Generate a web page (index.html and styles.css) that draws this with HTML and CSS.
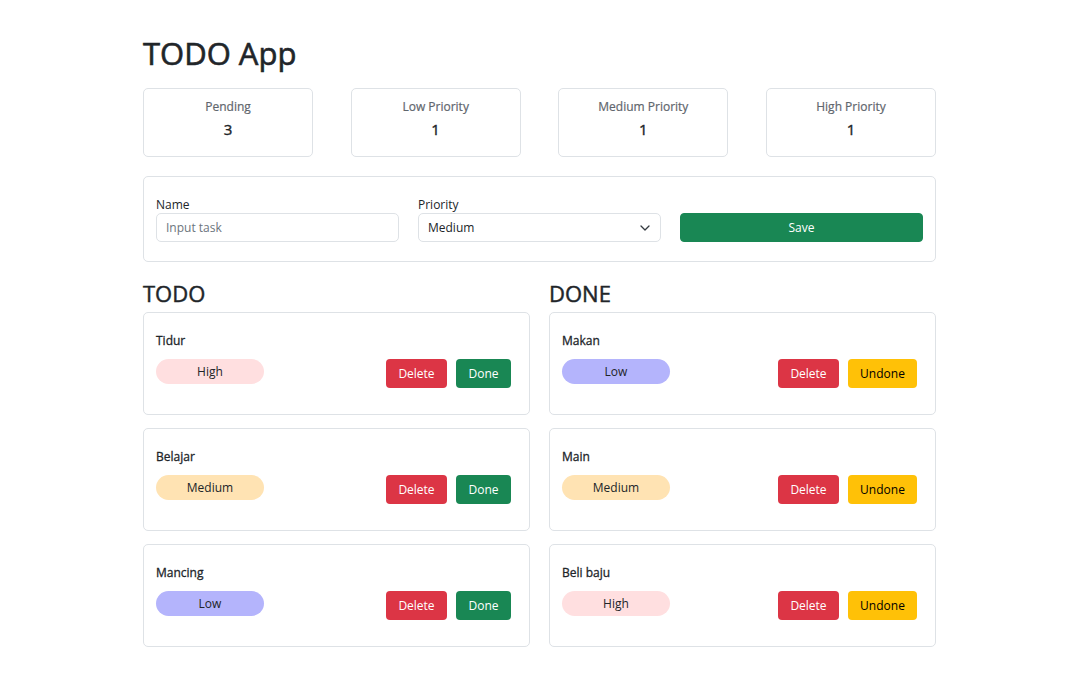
FILE: index.html
```html
<!DOCTYPE html>
<html>
<head>
<meta charset="utf-8">
<link rel="stylesheet" href="styles.css">
</head>
<body>
<div class="container">
  <h1 class="title">TODO App</h1>
  <div class="stats">
    <div class="stat"><div class="stat-label">Pending</div><div class="stat-value">3</div></div>
    <div class="stat"><div class="stat-label">Low Priority</div><div class="stat-value">1</div></div>
    <div class="stat"><div class="stat-label">Medium Priority</div><div class="stat-value">1</div></div>
    <div class="stat"><div class="stat-label">High Priority</div><div class="stat-value">1</div></div>
  </div>
  <div class="form-card">
    <div class="field">
      <label class="label">Name</label>
      <input class="input" type="text" placeholder="Input task">
    </div>
    <div class="field">
      <label class="label">Priority</label>
      <div class="select">
        <span>Medium</span>
        <svg width="10" height="6" viewBox="0 0 10 6"><path d="M1 1l4 4 4-4" fill="none" stroke="#343a40" stroke-width="1.3" stroke-linecap="round" stroke-linejoin="round"/></svg>
      </div>
    </div>
    <div class="field field-btn">
      <button class="btn btn-save">Save</button>
    </div>
  </div>
  <div class="lists">
    <div class="list">
      <h2 class="list-title">TODO</h2>
      <div class="task">
        <div class="task-name">Tidur</div>
        <div class="task-row">
          <span class="badge badge-high">High</span>
          <div class="actions"><button class="btn btn-delete">Delete</button><button class="btn btn-done">Done</button></div>
        </div>
      </div>
      <div class="task">
        <div class="task-name">Belajar</div>
        <div class="task-row">
          <span class="badge badge-medium">Medium</span>
          <div class="actions"><button class="btn btn-delete">Delete</button><button class="btn btn-done">Done</button></div>
        </div>
      </div>
      <div class="task">
        <div class="task-name">Mancing</div>
        <div class="task-row">
          <span class="badge badge-low">Low</span>
          <div class="actions"><button class="btn btn-delete">Delete</button><button class="btn btn-done">Done</button></div>
        </div>
      </div>
    </div>
    <div class="list">
      <h2 class="list-title">DONE</h2>
      <div class="task">
        <div class="task-name">Makan</div>
        <div class="task-row">
          <span class="badge badge-low">Low</span>
          <div class="actions"><button class="btn btn-delete">Delete</button><button class="btn btn-undone">Undone</button></div>
        </div>
      </div>
      <div class="task">
        <div class="task-name">Main</div>
        <div class="task-row">
          <span class="badge badge-medium">Medium</span>
          <div class="actions"><button class="btn btn-delete">Delete</button><button class="btn btn-undone">Undone</button></div>
        </div>
      </div>
      <div class="task">
        <div class="task-name">Beli baju</div>
        <div class="task-row">
          <span class="badge badge-high">High</span>
          <div class="actions"><button class="btn btn-delete">Delete</button><button class="btn btn-undone">Undone</button></div>
        </div>
      </div>
    </div>
  </div>
</div>
</body>
</html>
```
FILE: styles.css
```css
* { box-sizing: border-box; }
body {
  margin: 0;
  background: #fff;
  color: #212529;
  font-family: "Open Sans", "Noto Sans", sans-serif;
  font-size: 12px;
}
.container {
  width: 793px;
  margin-left: 143px;
  padding-top: 33px;
}
.title {
  margin: 0 0 15px;
  font-size: 31px;
  font-weight: 400;
  line-height: 40px;
  -webkit-text-stroke: 0.6px #212529;
}
.stats {
  display: flex;
  justify-content: space-between;
}
.stat {
  width: 170px;
  height: 69px;
  border: 1px solid #dee2e6;
  border-radius: 5px;
  text-align: center;
  padding-top: 9px;
}
.stat-label {
  color: #5f666d;
  font-size: 12px;
  line-height: 18px;
  -webkit-text-stroke: 0.2px #5f666d;
}
.stat-value {
  font-size: 15px;
  line-height: 22px;
  margin-top: 2px;
  -webkit-text-stroke: 0.4px #212529;
}
.form-card {
  margin-top: 19px;
  border: 1px solid #dee2e6;
  border-radius: 5px;
  padding: 20px 12px 19px;
  display: grid;
  grid-template-columns: repeat(3, 1fr);
  column-gap: 19px;
}
.field { display: flex; flex-direction: column; }
.field-btn { justify-content: flex-end; }
.label { font-size: 12px; line-height: 16px; }
.input, .select {
  height: 29px;
  border: 1px solid #dee2e6;
  border-radius: 5px;
  font-family: inherit;
  font-size: 12px;
  padding: 0 9px;
  color: #212529;
  outline: none;
}
.input::placeholder { color: #6c757d; }
.select {
  display: flex;
  align-items: center;
  justify-content: space-between;
  padding-right: 10px;
}
.btn {
  border: 1px solid transparent;
  border-radius: 4px;
  font-family: inherit;
  font-size: 12px;
  height: 29px;
  padding: 0 10px;
  color: #fff;
  cursor: pointer;
}
.btn-save { width: 100%; background: #198754; border-color: #198754; }
.btn-delete { background: #dc3545; width: 61px; }
.btn-done { background: #198754; width: 55px; }
.btn-undone { background: #ffc107; color: #000; width: 69px; }
.lists {
  display: grid;
  grid-template-columns: 1fr 1fr;
  column-gap: 19px;
  margin-top: 18px;
}
.list-title {
  margin: 0 0 5px;
  font-size: 22px;
  font-weight: 400;
  line-height: 27px;
  -webkit-text-stroke: 0.45px #212529;
}
.list { display: flex; flex-direction: column; }
.task {
  border: 1px solid #dee2e6;
  border-radius: 5px;
  padding: 19px 18px 26px 12px;
  margin-bottom: 13px;
}
.task-name {
  font-size: 12px;
  line-height: 18px;
  margin-bottom: 9px;
  -webkit-text-stroke: 0.3px #212529;
}
.task-row {
  display: flex;
  justify-content: space-between;
  align-items: flex-start;
}
.badge {
  width: 108px;
  height: 25px;
  border-radius: 13px;
  text-align: center;
  line-height: 25px;
  font-size: 12px;
}
.badge-high { background: #ffdfe0; }
.badge-medium { background: #ffe3b3; }
.badge-low { background: #b4b4fc; }
.actions { display: flex; gap: 9px; }
```
